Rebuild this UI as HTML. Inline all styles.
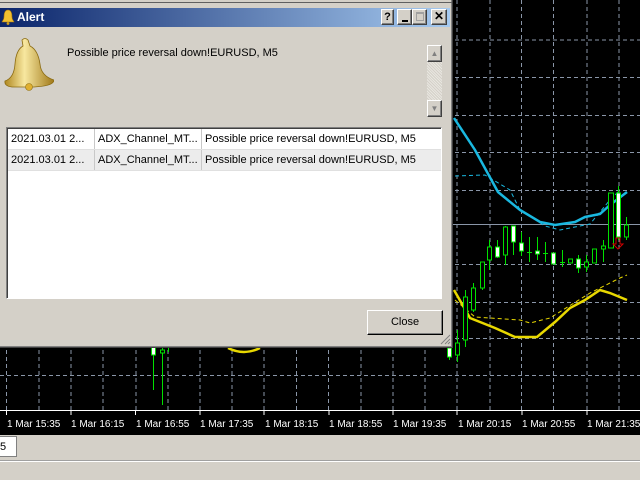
<!DOCTYPE html>
<html><head><style>
*{margin:0;padding:0;box-sizing:border-box}
body{width:640px;height:480px;overflow:hidden;background:#000;font-family:"Liberation Sans",sans-serif;font-size:11px;position:relative}
.abs{position:absolute}
.btn{position:absolute;background:#d4d0c8;border:1px solid;border-color:#fff #404040 #404040 #fff;box-shadow:inset -1px -1px 0 #808080;text-align:center;font-weight:bold;color:#000}
.cell{position:absolute;top:0;height:100%;line-height:20px;padding-left:3px;white-space:nowrap;overflow:hidden;border-right:1px solid #c8c8c8}
</style></head><body>
<svg class="abs" style="left:0;top:0" width="640" height="435">
<rect width="640" height="435" fill="#000"/>
<g stroke="#8a96a8" stroke-width="1" stroke-dasharray="4,3">
<line x1="6.5" y1="0" x2="6.5" y2="410"/><line x1="39" y1="0" x2="39" y2="410"/><line x1="71" y1="0" x2="71" y2="410"/><line x1="103" y1="0" x2="103" y2="410"/><line x1="136" y1="0" x2="136" y2="410"/><line x1="168" y1="0" x2="168" y2="410"/><line x1="200" y1="0" x2="200" y2="410"/><line x1="232" y1="0" x2="232" y2="410"/><line x1="264" y1="0" x2="264" y2="410"/><line x1="296.5" y1="0" x2="296.5" y2="410"/><line x1="328.5" y1="0" x2="328.5" y2="410"/><line x1="361" y1="0" x2="361" y2="410"/><line x1="393" y1="0" x2="393" y2="410"/><line x1="425" y1="0" x2="425" y2="410"/><line x1="457" y1="0" x2="457" y2="410"/><line x1="490" y1="0" x2="490" y2="410"/><line x1="521.5" y1="0" x2="521.5" y2="410"/><line x1="553.5" y1="0" x2="553.5" y2="410"/><line x1="587" y1="0" x2="587" y2="410"/><line x1="619" y1="0" x2="619" y2="410"/>
<line x1="0" y1="40" x2="640" y2="40"/><line x1="0" y1="77.5" x2="640" y2="77.5"/><line x1="0" y1="115.5" x2="640" y2="115.5"/><line x1="0" y1="152.5" x2="640" y2="152.5"/><line x1="0" y1="190.5" x2="640" y2="190.5"/><line x1="0" y1="264.5" x2="640" y2="264.5"/><line x1="0" y1="302.5" x2="640" y2="302.5"/><line x1="0" y1="338.5" x2="640" y2="338.5"/><line x1="0" y1="375.5" x2="640" y2="375.5"/>
</g>
<line x1="0" y1="224.5" x2="640" y2="224.5" stroke="#8a96a8"/>
<line x1="0" y1="410.5" x2="640" y2="410.5" stroke="#fff"/>
<g stroke="#fff"><line x1="6.5" y1="411" x2="6.5" y2="415"/><line x1="71" y1="411" x2="71" y2="415"/><line x1="135.5" y1="411" x2="135.5" y2="415"/><line x1="200" y1="411" x2="200" y2="415"/><line x1="264" y1="411" x2="264" y2="415"/><line x1="329" y1="411" x2="329" y2="415"/><line x1="393" y1="411" x2="393" y2="415"/><line x1="457" y1="411" x2="457" y2="415"/><line x1="522" y1="411" x2="522" y2="415"/><line x1="587" y1="411" x2="587" y2="415"/></g>
<g fill="#fff" font-family="'Liberation Sans',sans-serif" font-size="10">
<text x="7" y="427">1 Mar 15:35</text><text x="71" y="427">1 Mar 16:15</text><text x="136" y="427">1 Mar 16:55</text><text x="200" y="427">1 Mar 17:35</text><text x="265" y="427">1 Mar 18:15</text><text x="329" y="427">1 Mar 18:55</text><text x="393" y="427">1 Mar 19:35</text><text x="458" y="427">1 Mar 20:15</text><text x="522" y="427">1 Mar 20:55</text><text x="587" y="427">1 Mar 21:35</text>
</g>
<polyline fill="none" stroke="#e8d800" stroke-width="1" stroke-dasharray="4,3" points="455,300 475,317 520,320 530,323 550,318 590,293 620,278 627,275"/>
<polyline fill="none" stroke="#e8d800" stroke-width="2.5" points="454,290 470,318 480,322 495,328 515,337 537,337 555,322 570,308 585,300 600,290 610,293 627,300"/>
<path d="M228,348 Q244,356 260,348" fill="none" stroke="#e8d800" stroke-width="2.5"/>
<polyline fill="none" stroke="#1ab8e0" stroke-width="1" stroke-dasharray="4,3" points="455,176 485,175 510,190 520,210 545,226 560,230 590,224 610,200 620,190"/>
<polyline fill="none" stroke="#1ab8e0" stroke-width="2.5" points="454,118 475,150 498,192 520,210 540,222 555,225 575,222 585,217 600,214 610,205 627,192"/>
<g stroke="#00e000" stroke-width="1">
<line x1="153.5" y1="347" x2="153.5" y2="390"/><rect x="151.5" y="347" width="4" height="8" fill="#fff"/>
<line x1="162.5" y1="347" x2="162.5" y2="405"/><rect x="160.5" y="350" width="4" height="3" fill="#000"/>
<line x1="168.5" y1="347" x2="168.5" y2="352"/>
<line x1="449.5" y1="345" x2="449.5" y2="360"/><rect x="447.5" y="348" width="4" height="9" fill="#fff"/>
<line x1="457.5" y1="330" x2="457.5" y2="362"/><rect x="455.5" y="343" width="4" height="12" fill="#000"/>
<line x1="465.5" y1="290" x2="465.5" y2="347"/><rect x="463.5" y="297" width="4" height="43" fill="#000"/>
<line x1="473.5" y1="283" x2="473.5" y2="312"/><rect x="471.5" y="288" width="4" height="22" fill="#000"/>
<line x1="482.5" y1="262" x2="482.5" y2="290"/><rect x="480.5" y="262" width="4" height="26" fill="#000"/>
<line x1="489.5" y1="240" x2="489.5" y2="270"/><rect x="487.5" y="247" width="4" height="13" fill="#000"/>
<line x1="497.5" y1="240" x2="497.5" y2="258"/><rect x="495.5" y="247" width="4" height="10" fill="#fff"/>
<line x1="505.5" y1="226" x2="505.5" y2="265"/><rect x="503.5" y="227" width="4" height="28" fill="#000"/>
<line x1="513.5" y1="226" x2="513.5" y2="255"/><rect x="511.5" y="226" width="4" height="16" fill="#fff"/>
<line x1="521.5" y1="232" x2="521.5" y2="256"/><rect x="519.5" y="243" width="4" height="8" fill="#fff"/>
<line x1="529.5" y1="237" x2="529.5" y2="262"/><line x1="527" y1="252.5" x2="532" y2="252.5"/>
<line x1="537.5" y1="237" x2="537.5" y2="260"/><rect x="535.5" y="251" width="4" height="3" fill="#fff"/>
<line x1="545.5" y1="242" x2="545.5" y2="262"/><line x1="543" y1="253.5" x2="548" y2="253.5"/>
<rect x="551.5" y="253" width="4" height="11" fill="#fff"/>
<line x1="562.5" y1="250" x2="562.5" y2="267"/><line x1="560" y1="262.5" x2="565" y2="262.5"/>
<rect x="568.5" y="259" width="4" height="4" fill="#000"/>
<line x1="578.5" y1="255" x2="578.5" y2="273"/><rect x="576.5" y="259" width="4" height="9" fill="#fff"/>
<line x1="586.5" y1="255" x2="586.5" y2="272"/><rect x="584.5" y="262" width="4" height="5" fill="#000"/>
<rect x="592.5" y="249" width="4" height="14" fill="#000"/>
<line x1="603.5" y1="240" x2="603.5" y2="262"/><rect x="601.5" y="246" width="4" height="3" fill="#000"/>
<rect x="608.5" y="193" width="5" height="55" fill="#000"/>
<line x1="618.5" y1="186" x2="618.5" y2="240"/><rect x="616.5" y="193" width="4" height="44" fill="#fff"/>
<line x1="626.5" y1="217" x2="626.5" y2="240"/><rect x="624.5" y="225" width="4" height="12" fill="#000"/>
</g>
<path d="M616,238 h4 v6 h3 l-5,5 l-5,-5 h3z" fill="none" stroke="#d00000"/>
</svg>
<div class="abs" style="left:0;top:435px;width:640px;height:45px;background:#d4d0c8"></div>
<div class="abs" style="left:0;top:436px;width:17px;height:21px;background:#fff;border:1px solid #808080;border-left:none;font-size:11px;line-height:20px">5</div>
<div class="abs" style="left:0;top:460px;width:640px;height:1px;background:#a0a0a0"></div>
<div class="abs" style="left:0;top:461px;width:640px;height:1px;background:#fff"></div>
<div class="abs" style="left:0;top:0;width:453px;height:348px;background:#d4d0c8;border-right:1px solid #404040;border-bottom:1px solid #404040;box-shadow:inset -1px -1px 0 #808080">
<div class="abs" style="left:0;top:2px;width:452px;height:1px;background:#606060"></div>
<div class="abs" style="left:0;top:8px;width:450px;height:19px;background:linear-gradient(to right,#0a246a,#a6caf0)"></div>
<svg class="abs" style="left:1px;top:9px" width="14" height="16" viewBox="0 0 14 16"><path d="M7,1 C4,1 3,4 3,8 C3,11 1,12 1,13 L13,13 C13,12 11,11 11,8 C11,4 10,1 7,1z" fill="#f0c030" stroke="#a07010" stroke-width="0.6"/><circle cx="7" cy="14.5" r="1.4" fill="#d0a020"/></svg>
<div class="abs" style="left:17px;top:10px;color:#fff;font-weight:bold;font-size:12px">Alert</div>
<div class="btn" style="left:381px;top:9px;width:13px;height:16px;font-size:11px;line-height:14px">?</div>
<div class="btn" style="left:397px;top:9px;width:15px;height:16px"><div class="abs" style="left:4px;top:10px;width:6px;height:2px;background:#000"></div></div>
<div class="btn" style="left:412px;top:9px;width:15px;height:16px"><div class="abs" style="left:3px;top:2px;width:8px;height:9px;border:1px solid #a0a0a0;border-top-width:2px"></div></div>
<div class="btn" style="left:431px;top:9px;width:16px;height:16px;font-size:12px;line-height:13px">✕</div>
<svg class="abs" style="left:4px;top:36px" width="50" height="55" viewBox="0 0 50 55">
<defs><linearGradient id="g" x1="0" x2="1"><stop offset="0" stop-color="#b08820"/><stop offset="0.4" stop-color="#f8e8a0"/><stop offset="1" stop-color="#a07818"/></linearGradient></defs>
<path d="M18,4 Q21,1 24,4 L26,10 Q34,14 36,28 Q37,40 50,44 Q50,50 30,51 L8,51 Q0,50 1,45 Q10,42 11,28 Q12,14 19,10z" fill="url(#g)" stroke="#8a6a10" stroke-width="0.8"/>
<circle cx="25" cy="51" r="3.5" fill="#e0b030" stroke="#907010" stroke-width="0.6"/>
</svg>
<div class="abs" style="left:67px;top:47px;font-size:11px">Possible price reversal down!EURUSD, M5</div>
<div class="btn" style="left:427px;top:45px;width:15px;height:17px;font-size:8px;color:#808080;line-height:15px">▲</div>
<div class="abs" style="left:427px;top:62px;width:15px;height:38px;background:repeating-linear-gradient(45deg,#e8e6e0 0 1px,#d4d0c8 1px 2px)"></div>
<div class="btn" style="left:427px;top:100px;width:15px;height:17px;font-size:8px;color:#808080;line-height:15px">▼</div>
<div class="abs" style="left:6px;top:127px;width:436px;height:172px;background:#fff;border:1px solid;border-color:#808080 #fff #fff #808080;box-shadow:inset 1px 1px 0 #404040">
<div class="abs" style="left:1px;top:1px;width:433px;height:21px;border-bottom:1px solid #e0e0e0">
<div class="cell" style="left:0;width:87px">2021.03.01 2...</div><div class="cell" style="left:87px;width:107px">ADX_Channel_MT...</div><div class="cell" style="left:194px;width:239px;border:none">Possible price reversal down!EURUSD, M5</div></div>
<div class="abs" style="left:1px;top:22px;width:433px;height:21px;background:#ececec;border-bottom:1px solid #e0e0e0">
<div class="cell" style="left:0;width:87px">2021.03.01 2...</div><div class="cell" style="left:87px;width:107px">ADX_Channel_MT...</div><div class="cell" style="left:194px;width:239px;border:none">Possible price reversal down!EURUSD, M5</div></div>
</div>
<div class="btn" style="left:367px;top:310px;width:76px;height:25px;font-weight:normal;line-height:22px;border-color:#fff #000 #000 #fff">Close</div>
<svg class="abs" style="left:440px;top:334px" width="11" height="11"><g stroke="#808080"><line x1="10" y1="1" x2="1" y2="10"/><line x1="10" y1="5" x2="5" y2="10"/><line x1="10" y1="8" x2="8" y2="10"/></g></svg>
</div>
</body></html>
